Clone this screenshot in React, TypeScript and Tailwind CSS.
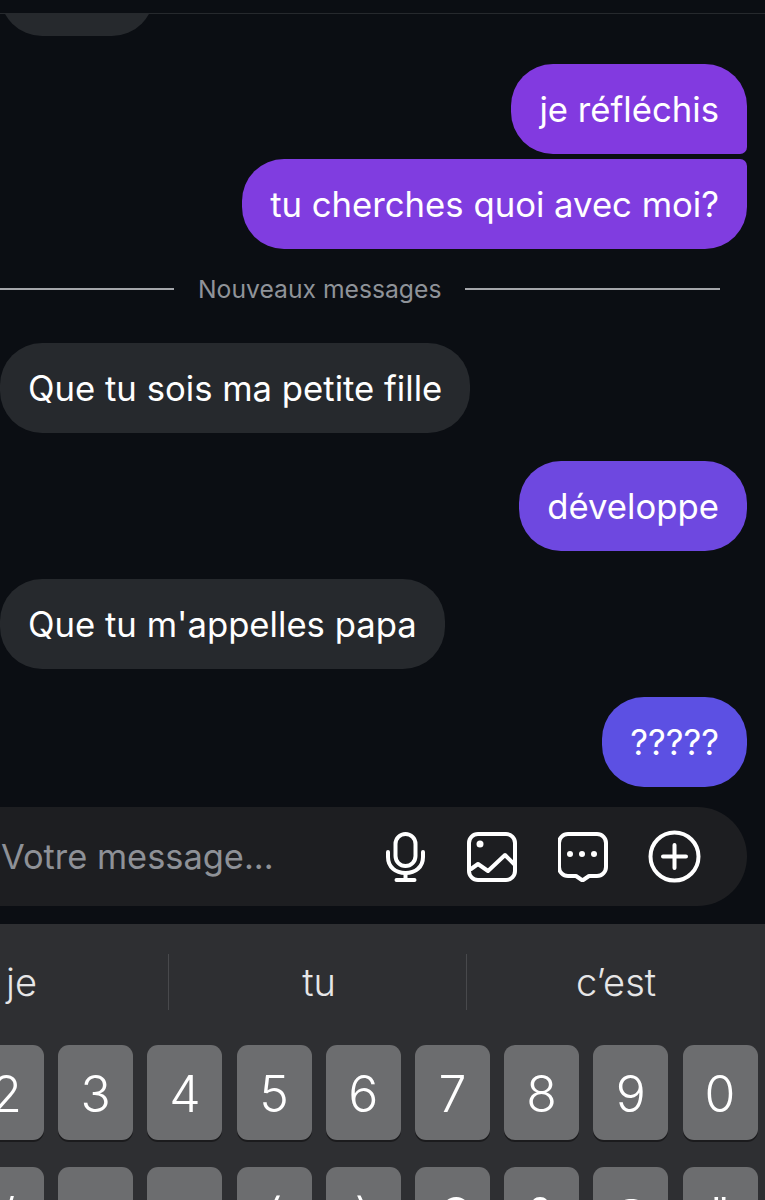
const keysTop = ['2', '3', '4', '5', '6', '7', '8', '9', '0']
const keysBottom = ['/', ':', ';', '(', ')', '€', '&', '@', '"']

function Sent({ text, color, className = '' }: { text: string; color: string; className?: string }) {
  return (
    <div className="flex justify-end pr-[18px]">
      <div className={`flex h-[90px] items-center rounded-[42px] px-7 text-[34.7px] text-white ${color} ${className}`}>
        {text}
      </div>
    </div>
  )
}

function Received({ text }: { text: string }) {
  return (
    <div className="flex">
      <div className="flex h-[90px] items-center rounded-[42px] bg-[#26292d] px-7 text-[34.7px] text-white">
        {text}
      </div>
    </div>
  )
}

function KeyRow({ keys, className = '' }: { keys: string[]; className?: string }) {
  return (
    <div className={`ml-[-31px] flex gap-[14.2px] ${className}`}>
      {keys.map(k => (
        <div
          key={k}
          className="flex h-[95px] w-[75px] shrink-0 items-center justify-center rounded-[11px] bg-[#6c6d6f] pt-[4px] text-[50px] font-light text-white shadow-[0_2px_0_#1b1b1d]"
        >
          {k}
        </div>
      ))}
    </div>
  )
}

export default function App() {
  return (
    <div className="flex h-[1200px] w-[765px] flex-col overflow-hidden bg-[#0b0e13] font-['Inter',sans-serif]">
      <div className="h-[14px] shrink-0 border-b border-[#26292d]" />
      <div className="h-[22px] shrink-0 overflow-hidden">
        <div className="mt-[-68px] h-[90px] w-[154px] rounded-[42px] bg-[#26292d]" />
      </div>

      <Sent text="je réfléchis" color="bg-[#823ae0]" className="mt-7 rounded-br-[7px]" />
      <Sent text="tu cherches quoi avec moi?" color="bg-[#803de0]" className="mt-[5px] rounded-tr-[7px]" />

      <div className="mt-[24px] flex h-[32px] items-center pr-[45px] text-[24.7px] text-[#8f9399]">
        <div className="h-0.5 w-[174px] bg-[#a4a6aa]" />
        <span className="mx-[24px] whitespace-nowrap pt-[2px]">Nouveaux messages</span>
        <div className="h-0.5 flex-1 bg-[#a4a6aa]" />
      </div>

      <div className="mt-[38px]">
        <Received text="Que tu sois ma petite fille" />
      </div>
      <div className="mt-7">
        <Sent text="développe" color="bg-[#6e48e0]" />
      </div>
      <div className="mt-7">
        <Received text="Que tu m'appelles papa" />
      </div>
      <div className="mt-7">
        <Sent text="?????" color="bg-[#5c50e3]" />
      </div>

      <div className="mt-5 mr-[18px] ml-[-40px] flex h-[99px] shrink-0 items-center rounded-r-[50px] bg-[#1d1e21] pl-[41px]">
        <span className="flex-1 text-[34.4px] text-[#8e9197]">Votre message...</span>
        <svg className="mr-[41px] h-[50px] w-[40px]" viewBox="0 0 40 50" fill="none" stroke="white" strokeWidth="4" strokeLinecap="round" strokeLinejoin="round">
          <rect x="9.500" y="2" width="20" height="32" rx="10" />
          <path d="M2 20v5c0 10 7.500 16 17.500 16s17.500-6 17.500-16v-5" />
          <path d="M19.500 41v7M10.500 48h18" />
        </svg>
        <svg className="mr-[41px] h-[50px] w-[50px]" viewBox="0 0 50 50" fill="none" stroke="white" strokeWidth="4" strokeLinecap="round" strokeLinejoin="round">
          <rect x="2" y="2" width="46" height="46" rx="9" />
          <circle cx="13" cy="12" r="3.500" fill="white" stroke="none" />
          <path d="M4 37l7-5 10 7 17-16 10 10" />
        </svg>
        <svg className="mr-[40px] h-[50px] w-[50px]" viewBox="0 0 50 50" fill="none" stroke="white" strokeWidth="4" strokeLinecap="round" strokeLinejoin="round">
          <path d="M11 2h28a9 9 0 0 1 9 9v24a9 9 0 0 1-9 9h-8l-6.500 4.500-6.500-4.500h-8a9 9 0 0 1-9-9V11a9 9 0 0 1 9-9z" />
          <circle cx="12" cy="22" r="3" fill="white" stroke="none" />
          <circle cx="24" cy="22" r="3" fill="white" stroke="none" />
          <circle cx="36" cy="22" r="3" fill="white" stroke="none" />
        </svg>
        <svg className="mr-[46px] h-[53px] w-[53px]" viewBox="0 0 53 53" fill="none" stroke="white" strokeWidth="4" strokeLinecap="round">
          <circle cx="26.500" cy="26.500" r="24" />
          <path d="M26.500 15v23M15 26.500h23" />
        </svg>
      </div>

      <div className="mt-[18px] flex-1 bg-[#2e2f32]">
        <div className="flex h-[121px] items-end pb-[35px] text-[38px] font-light text-[#e6e6e7]">
          <div className="flex h-[56px] w-[169px] items-center border-r border-[#48494c] pl-[6px]">je</div>
          <div className="flex h-[56px] w-[298px] items-center justify-center border-r border-[#48494c] pl-[3px]">tu</div>
          <div className="flex h-[56px] flex-1 items-center justify-center">c’est</div>
        </div>
        <KeyRow keys={keysTop} />
        <KeyRow keys={keysBottom} className="mt-[27px]" />
      </div>
    </div>
  )
}
